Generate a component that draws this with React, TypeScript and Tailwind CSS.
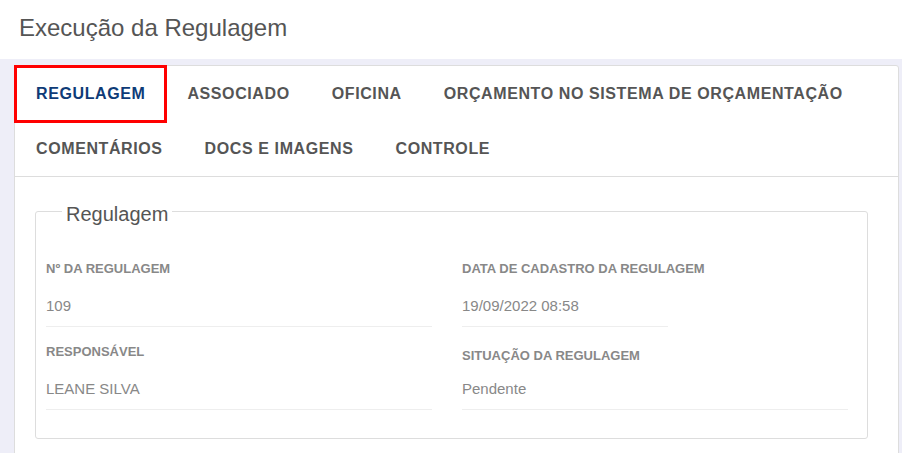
import React from 'react';

const font = { fontFamily: '"Liberation Sans", Arial, sans-serif' };

const tabs = [
  'REGULAGEM',
  'ASSOCIADO',
  'OFICINA',
  'ORÇAMENTO NO SISTEMA DE ORÇAMENTAÇÃO',
  'COMENTÁRIOS',
  'DOCS E IMAGENS',
  'CONTROLE',
];

const Field: React.FC<{
  label: string;
  value: string;
  lineWidth?: string;
  className?: string;
  valueGap?: string;
}> = ({ label, value, lineWidth = 'w-full', className = '', valueGap = 'mt-[18px]' }) => (
  <div className={className}>
    <div className="text-[13px] leading-[18px] font-bold text-[#888]">{label}</div>
    <div className={`${lineWidth} ${valueGap} pb-[10px] border-b border-[#eee] text-[15px] leading-[20px] text-[#888]`}>
      {value}
    </div>
  </div>
);

export default function App() {
  return (
    <div className="min-h-screen bg-[#eeeef8]" style={font}>
      <header className="h-[59px] bg-white pl-[19px] pt-[14px]">
        <h1 className="text-[24px] leading-[28px] text-[#555]">Execução da Regulagem</h1>
      </header>

      <main className="pl-[14px] pr-[3px] pt-[6px]">
        <div className="bg-white border border-[#ddd] rounded-[3px] min-h-[400px]">
          <nav className="flex flex-wrap border-b border-[#ddd]">
            {tabs.map((t, i) => (
              <div
                key={t}
                className={`relative h-[55px] flex items-center px-[21px] text-[16px] font-bold tracking-[0.6px] ${
                  i === 0 ? 'text-[#0e3b77]' : 'text-[#555]'
                }`}
              >
                {t}
                {i === 0 && (
                  <span className="absolute -left-px -top-px -right-px -bottom-[2px] border-[3px] border-[#ff0000]" />
                )}
              </div>
            ))}
          </nav>

          <div className="pt-[17px] pl-5 pr-[30px] pb-6">
            <fieldset className="border border-[#ddd] rounded-[3px] pb-[28px]">
              <legend className="ml-[26px] px-[4px] pt-[6px] text-[20px] leading-[28px] text-[#555]">
                Regulagem
              </legend>
              <div className="grid grid-cols-[386px_386px] gap-x-[30px] pl-[10px] pt-[32px]">
                <div>
                  <Field label="Nº DA REGULAGEM" value="109" />
                  <Field label="RESPONSÁVEL" value="LEANE SILVA" className="mt-4" />
                </div>
                <div>
                  <Field label="DATA DE CADASTRO DA REGULAGEM" value="19/09/2022 08:58" lineWidth="w-[206px]" />
                  <Field
                    label="SITUAÇÃO DA REGULAGEM"
                    value="Pendente"
                    className="mt-5"
                    valueGap="mt-[14px]"
                  />
                </div>
              </div>
            </fieldset>
          </div>
        </div>
      </main>
    </div>
  );
}
